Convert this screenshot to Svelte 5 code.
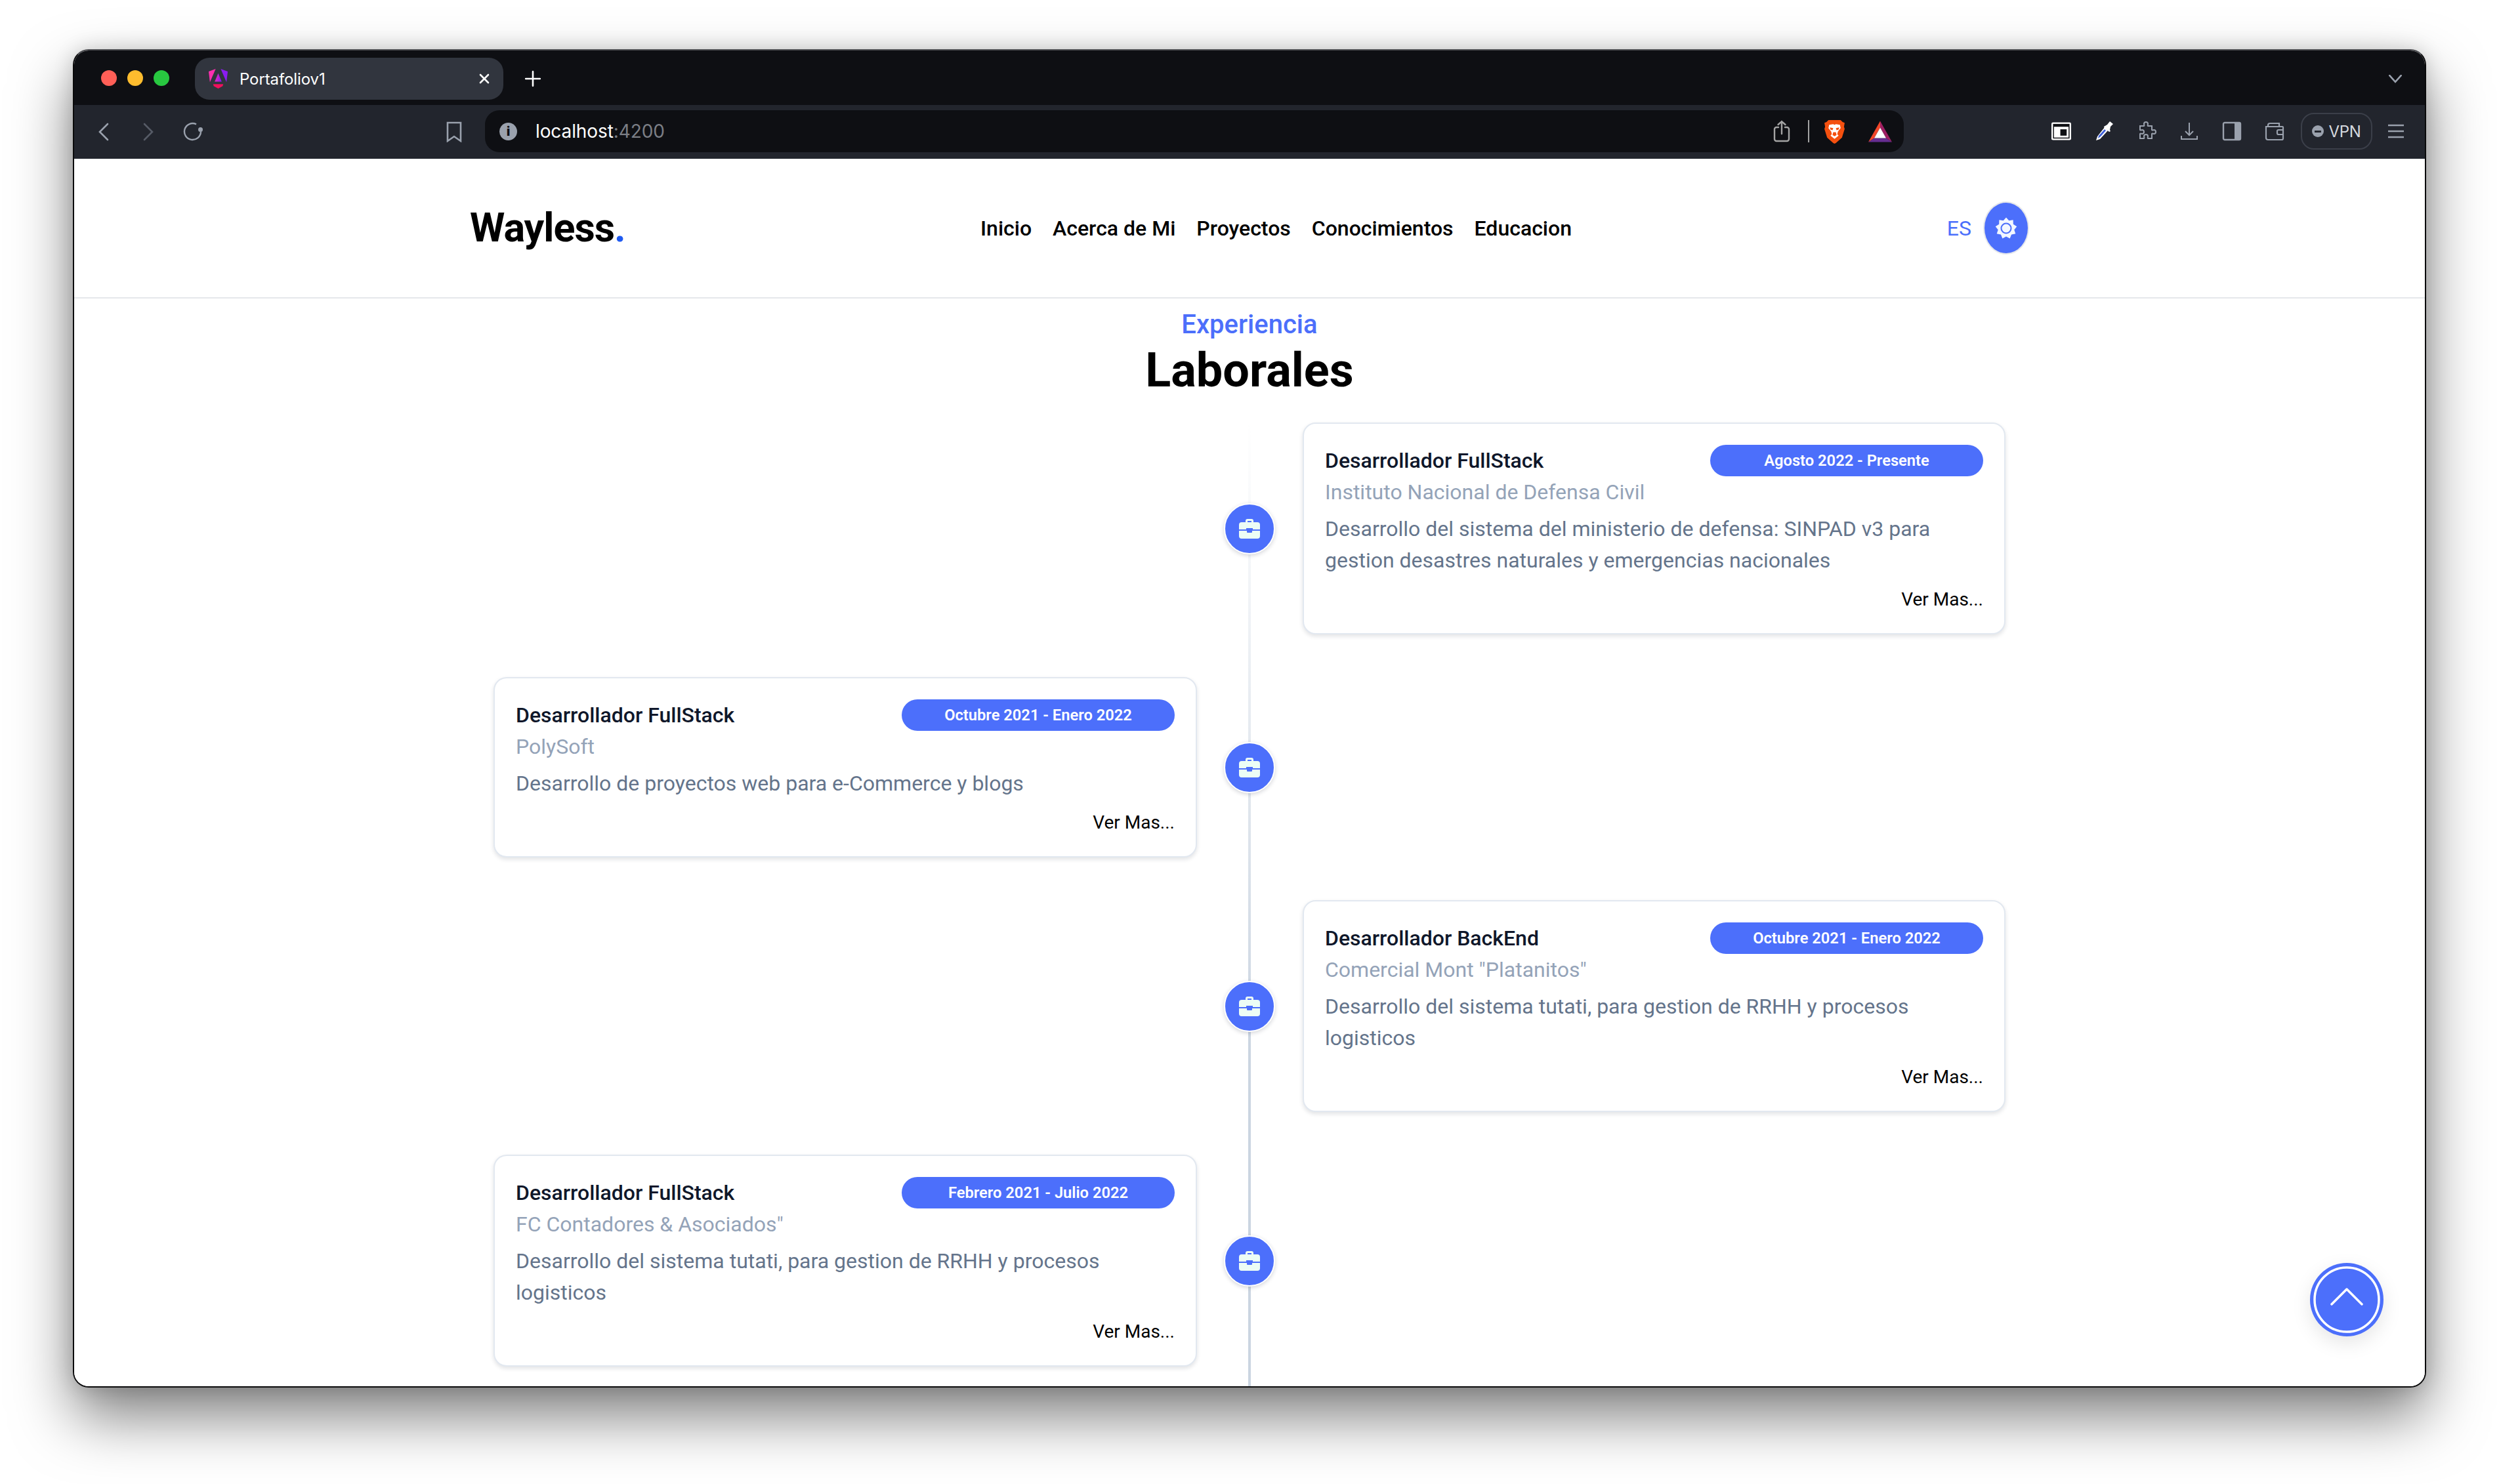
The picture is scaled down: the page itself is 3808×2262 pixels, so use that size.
<script>
  const left = [
    null,
    { title: 'Desarrollador FullStack', date: 'Octubre 2021 - Enero 2022', org: 'PolySoft', text: 'Desarrollo de proyectos web para e-Commerce y blogs' },
    null,
    { title: 'Desarrollador FullStack', date: 'Febrero 2021 - Julio 2022', org: 'FC Contadores & Asociados"', text: 'Desarrollo del sistema tutati, para gestion de RRHH y procesos logisticos' }
  ];
  const right = [
    { title: 'Desarrollador FullStack', date: 'Agosto 2022 - Presente', org: 'Instituto Nacional de Defensa Civil', text: 'Desarrollo del sistema del ministerio de defensa: SINPAD v3 para gestion desastres naturales y emergencias nacionales' },
    null,
    { title: 'Desarrollador BackEnd', date: 'Octubre 2021 - Enero 2022', org: 'Comercial Mont "Platanitos"', text: 'Desarrollo del sistema tutati, para gestion de RRHH y procesos logisticos' },
    null
  ];
  const rows = [0, 1, 2, 3];
  const nav = ['Inicio', 'Acerca de Mi', 'Proyectos', 'Conocimientos', 'Educacion'];
  const star = Array.from({ length: 18 }, (_, i) => {
    const a = (i * Math.PI) / 9 - Math.PI / 2;
    const r = i % 2 ? 12.5 : 16.5;
    return `${(18 + r * Math.cos(a)).toFixed(2)},${(18 + r * Math.sin(a)).toFixed(2)}`;
  }).join(' ');
</script>

{#snippet card(c)}
  <article class="card">
    <div class="card-head">
      <h3>{c.title}</h3>
      <span class="pill">{c.date}</span>
    </div>
    <p class="org">{c.org}</p>
    <p class="desc">{c.text}</p>
    <a class="more" href="#top">Ver Mas...</a>
  </article>
{/snippet}

<div class="desktop">
<div class="window">
  <div class="tabstrip">
    <div class="lights">
      <i class="red"></i><i class="yellow"></i><i class="green"></i>
    </div>
    <div class="tab">
      <svg class="fav" viewBox="0 0 32 34">
        <defs>
          <linearGradient id="ng" x1="0" y1="0" x2="1" y2="0.2"><stop offset="0" stop-color="#ff2fb0"/><stop offset="1" stop-color="#8a1cf0"/></linearGradient>
        </defs>
        <path d="M12 1 1 5l2 17Z" fill="#ff2fb0"/>
        <path d="M20 1l11 4-2 17Z" fill="#8a1cf0"/>
        <path d="M16 8l5.500 13h-11Z" fill="url(#ng)"/>
        <path d="M8 25h16l-1 3-7 4-7-4Z" fill="#f0105c"/>
      </svg>
      <span class="tab-title">Portafoliov1</span>
      <svg class="close" viewBox="0 0 16 16"><path d="M2 2l12 12M14 2 2 14" stroke="#fff" stroke-width="2.600" stroke-linecap="round"/></svg>
    </div>
    <svg class="plus" viewBox="0 0 24 24"><path d="M12 2v20M2 12h20" stroke="#fff" stroke-width="2.400" stroke-linecap="round"/></svg>
    <svg class="expand" viewBox="0 0 20 12"><path d="M2 1l8 9 8-9" fill="none" stroke="#9aa1ad" stroke-width="2.400" stroke-linecap="round"/></svg>
  </div>

  <div class="toolbar">
    <svg class="nav-btn back" viewBox="0 0 20 30"><path d="M16 3 4 15l12 12" fill="none" stroke="#9aa1ad" stroke-width="2.600" stroke-linecap="round"/></svg>
    <svg class="nav-btn fwd" viewBox="0 0 20 30"><path d="M4 3l12 12L4 27" fill="none" stroke="#565b66" stroke-width="2.600" stroke-linecap="round"/></svg>
    <svg class="reload" viewBox="0 0 32 32"><path d="M27 15.800A12.500 12.500 0 1 1 20 4.300" fill="none" stroke="#9aa1ad" stroke-width="2.400"/><circle cx="26.500" cy="12.500" r="3.500" fill="#9aa1ad"/></svg>
    <svg class="bookmark" viewBox="0 0 24 32"><path d="M2 2h20v28l-10-7-10 7Z" fill="none" stroke="#9aa1ad" stroke-width="2.600"/></svg>
    <div class="address">
      <span class="info">i</span>
      <span class="url">localhost<em>:4200</em></span>
      <svg class="share" viewBox="0 0 26 34"><path d="M8 11H5a3 3 0 0 0-3 3v15a3 3 0 0 0 3 3h16a3 3 0 0 0 3-3V14a3 3 0 0 0-3-3h-3M13 21V2M7.500 7 13 2l5.500 5" fill="none" stroke="#a3a3a3" stroke-width="2.400" stroke-linecap="round"/></svg>
      <span class="sep"></span>
      <svg class="brave" viewBox="0 0 32 36">
        <path d="M7 1h18l3 3 3 1-1 6 1 3-4 13-9 8-2 1-2-1-9-8-4-13 1-3-1-6 3-1Z" fill="#f4500f"/>
        <path d="M8 8l6-1 2 1 2-1 6 1 1 5-4 5-1 4 2 2-6 5-6-5 2-2-1-4-4-5Z" fill="#fff"/>
        <path d="M9 12l5 1-1 3-3-1ZM23 12l-5 1 1 3 3-1ZM14 19h4l1 4-3 2-3-2Z" fill="#f4500f"/>
      </svg>
      <svg class="bat" viewBox="0 0 36 32">
        <path d="M18 0 0 32l9-6 9-16Z" fill="#f1462a"/>
        <path d="M18 0 36 32l-9-6-9-16Z" fill="#9e1f63"/>
        <path d="M0 32h36l-9-6H9Z" fill="#662d91"/>
        <path d="M18 10 9 26h18Z" fill="#fff"/>
      </svg>
    </div>
    <div class="tools">
      <svg viewBox="0 0 31 28"><rect x="0" y="0" width="31" height="28" rx="2.500" fill="#fff"/><rect x="2.500" y="2.500" width="26" height="23" fill="#0e0f13"/><rect x="4" y="7" width="23" height="17" fill="#fff"/><rect x="14" y="11" width="10" height="10" fill="#0e0f13"/></svg>
      <svg viewBox="0 0 30 30"><path d="M16 9 5 23l-2 6 6-2 12-13Z" fill="#fff"/><path d="M7 22l9-10 2 2-8 9-4 3Z" fill="#3d5fd8"/><path d="M15 8l5-3 4-5 5 4-4 4-1 5 1 2-2 1-8-7Z" fill="#fff"/></svg>
      <svg viewBox="3 0 26 30"><path d="M12 4a3 3 0 0 1 6 0c0 1-1 2 0 3h6v6c1 1 2 0 3 0a3 3 0 0 1 0 6c-1 0-2-1-3 0v7h-6c-1-1 0-2 0-3a3 3 0 0 0-6 0c0 1 1 2 0 3H6v-7c1-1 2 0 3 0a3 3 0 0 0 0-6c-1 0-2 1-3 0V7h6c1-1 0-2 0-3Z" fill="none" stroke="#9aa1ad" stroke-width="2"/></svg>
      <svg viewBox="0 0 30 30"><path d="M15 2v19M9 15l6 6 6-6M3 22v5h24v-5" fill="none" stroke="#9aa1ad" stroke-width="2"/></svg>
      <svg viewBox="0 0 30 30"><rect x="2" y="2" width="26" height="26" rx="2" fill="none" stroke="#9aa1ad" stroke-width="2.400"/><rect x="19" y="2" width="9" height="26" fill="#9aa1ad"/></svg>
      <svg viewBox="0 0 30 30"><path d="M5 8V6a3 3 0 0 1 3-3h14v5M2 8h25a1 1 0 0 1 1 1v17a2 2 0 0 1-2 2H5a3 3 0 0 1-3-3ZM28 13h-7a2 2 0 0 0-2 2v3a2 2 0 0 0 2 2h7" fill="none" stroke="#9aa1ad" stroke-width="2.200"/></svg>
      <div class="vpn"><span class="vpn-dot"></span>VPN</div>
      <svg class="burger" viewBox="0 0 30 30"><path d="M3 6h24M3 15h24M3 24h24" stroke="#9aa1ad" stroke-width="2.400"/></svg>
    </div>
  </div>

  <main class="page" id="top">
    <header class="header">
      <div class="logo">Wayless<span>.</span></div>
      <nav class="nav">
        {#each nav as item}<a href="#top">{item}</a>{/each}
      </nav>
      <div class="actions">
        <span class="lang">ES</span>
        <button class="theme" aria-label="Tema">
          <svg viewBox="0 0 36 36">
            <polygon points={star} fill="#f2f7ff"/>
            <circle cx="18" cy="18" r="7.500" fill="#f2f7ff" stroke="#4c6ffb" stroke-width="2"/>
          </svg>
        </button>
      </div>
    </header>

    <section class="intro">
      <h2>Experiencia</h2>
      <h1>Laborales</h1>
    </section>

    <section class="timeline">
      <div class="line"></div>
      {#each rows as r}
        <div class="row">
          <div class="slot">{#if left[r]}{@render card(left[r])}{/if}</div>
          <div class="dot">
            <svg viewBox="0 0 32 30"><path fill="#ecfdf5" d="M10 5V3a3 3 0 0 1 3-3h6a3 3 0 0 1 3 3v2h6a4 4 0 0 1 4 4v7H21v-2h-10v2H0V9a4 4 0 0 1 4-4Zm3 0h6V3h-6ZM0 18h12v2a1 1 0 0 0 1 1h6a1 1 0 0 0 1-1v-2h12v8a4 4 0 0 1-4 4H4a4 4 0 0 1-4-4Z"/></svg>
          </div>
          <div class="slot">{#if right[r]}{@render card(right[r])}{/if}</div>
        </div>
      {/each}
    </section>

    <button class="top-btn" aria-label="Subir">
      <svg viewBox="0 0 112 112">
        <circle cx="56" cy="56" r="49" fill="none" stroke="#fff" stroke-width="3.500"/>
        <path d="M33 63 56 40l23 23" fill="none" stroke="#fff" stroke-width="3.500" stroke-linecap="round" stroke-linejoin="round"/>
      </svg>
    </button>
  </main>
</div>
</div>

<style>
  :global(body) {
    margin: 0;
    background: #fff;
  }
  .desktop {
    box-sizing: border-box;
    height: 2262px;
    padding: 75px 0 0 111px;
    overflow: hidden;
    background: #fff;
  }
  .window {
    box-sizing: border-box;
    position: relative;
    width: 3586px;
    height: 2040px;
    border-radius: 24px;
    border: 2px solid #0a0a0b;
    border-top-color: #4a4b4f;
    display: flex;
    flex-direction: column;
    font-family: Inter, "Liberation Sans", sans-serif;
    box-shadow: 0 44px 90px rgba(0, 0, 0, 0.5), 0 0 30px rgba(0, 0, 0, 0.16);
    background: #fff;
  }
  .tabstrip {
    flex: none;
    height: 83px;
    background: #0e0f13;
    display: flex;
    align-items: center;
    border-radius: 22px 22px 0 0;
  }
  .lights {
    display: flex;
    gap: 16px;
    margin-left: 41px;
  }
  .lights i {
    width: 24px;
    height: 24px;
    border-radius: 50%;
  }
  .red { background: #ff5f57; }
  .yellow { background: #febc2e; }
  .green { background: #28c840; }
  .tab {
    box-sizing: border-box;
    margin-left: 39px;
    width: 470px;
    height: 64px;
    background: #31353e;
    border-radius: 22px;
    display: flex;
    align-items: center;
    padding: 0 21px 0 20px;
    margin-top: 3px;
  }
  .fav { width: 31px; height: 33px; }
  .tab-title {
    margin-left: 17px;
    flex: 1;
    font-size: 24px;
    letter-spacing: -0.100px;
    color: #fff;
  }
  .close { width: 16px; height: 16px; }
  .plus { width: 26px; height: 26px; margin-left: 32px; margin-top: 3px; }
  .expand { width: 22px; height: 13px; margin-left: auto; margin-right: 34px; margin-top: 3px; }
  .toolbar {
    flex: none;
    height: 82px;
    background: #22252d;
    display: flex;
    align-items: center;
  }
  .nav-btn { width: 20px; height: 30px; }
  .back { margin-left: 35px; }
  .fwd { margin-left: 48px; }
  .reload { width: 32px; height: 32px; margin-left: 43px; }
  .bookmark { width: 24px; height: 32px; margin-left: 369px; }
  .address {
    box-sizing: border-box;
    width: 2162px;
    height: 64px;
    margin-left: 35px;
    background: #0e0f13;
    border-radius: 22px;
    display: flex;
    align-items: center;
    padding-left: 22px;
    margin-top: -2px;
  }
  .info {
    width: 27px;
    height: 27px;
    border-radius: 50%;
    background: #9aa1ad;
    color: #0e0f13;
    font-size: 20px;
    font-weight: 800;
    line-height: 27px;
    text-align: center;
  }
  .url {
    margin-left: 28px;
    color: #fff;
    font-size: 28px;
    letter-spacing: -0.100px;
    flex: 1;
  }
  .url em { font-style: normal; color: #7b7e85; }
  .share { width: 26px; height: 34px; margin-right: 27px; }
  .sep { width: 2px; height: 34px; background: #a3a3a3; margin-right: 22px; }
  .brave { width: 33px; height: 37px; margin-right: 35px; }
  .bat { width: 36px; height: 33px; margin-right: 18px; }
  .tools {
    display: flex;
    align-items: center;
    gap: 35px;
    margin-left: 225px;
    margin-top: -2px;
  }
  .tools > svg { width: 30px; height: 30px; }
  .vpn {
    box-sizing: border-box;
    width: 109px;
    height: 56px;
    margin-left: -10px;
    border: 2px solid #3b3f49;
    border-radius: 20px;
    display: flex;
    align-items: center;
    justify-content: center;
    gap: 7px;
    color: #d5d8de;
    font-size: 24px;
    letter-spacing: -0.300px;
  }
  .vpn-dot {
    width: 18px;
    height: 18px;
    border-radius: 50%;
    background: #9aa1ad;
    position: relative;
  }
  .vpn-dot::after {
    content: '';
    position: absolute;
    left: 4px;
    right: 4px;
    top: 8px;
    height: 3px;
    background: #22252d;
  }
  .tools > .burger { margin-left: -14px; }
  .page {
    flex: 1;
    min-height: 0;
    position: relative;
    background: #fff;
    border-radius: 0 0 22px 22px;
    overflow: hidden;
    font-family: Roboto, Inter, sans-serif;
  }
  .header {
    box-sizing: border-box;
    height: 213px;
    border-bottom: 2px solid #e5e7eb;
    padding: 0 603px;
    display: flex;
    align-items: center;
  }
  .logo {
    font-size: 61px;
    font-weight: 700;
    letter-spacing: -1px;
    color: #000;
    width: 778px;
    margin-top: -2px;
  }
  .logo span { color: #1f5af0; }
  .nav {
    display: flex;
    gap: 32px;
  }
  .nav a {
    color: #000;
    text-decoration: none;
    font-size: 32px;
    font-weight: 500;
  }
  .actions {
    margin-left: auto;
    display: flex;
    align-items: center;
    gap: 18px;
  }
  .lang {
    color: #4c6ffb;
    font-size: 32px;
  }
  .theme {
    box-sizing: border-box;
    width: 70px;
    height: 81px;
    padding: 0;
    border-radius: 50%;
    border: 2px solid #e5e7eb;
    background: #4c6ffb;
    display: flex;
    align-items: center;
    justify-content: center;
  }
  .theme svg { width: 36px; height: 36px; }
  .intro {
    text-align: center;
    padding-top: 14px;
    height: 189px;
    box-sizing: border-box;
  }
  .intro h2 {
    margin: 0;
    font-size: 40px;
    line-height: 52px;
    font-weight: 500;
    color: #4c6ffb;
  }
  .intro h1 {
    margin: 0;
    font-size: 72px;
    line-height: 88px;
    font-weight: 700;
    color: #000;
  }
  .timeline {
    position: relative;
    margin-left: 639px;
    display: flex;
    flex-direction: column;
    gap: 65px;
  }
  .line {
    position: absolute;
    left: 1150px;
    top: 0;
    height: 1600px;
    width: 4px;
    background: linear-gradient(to bottom, transparent, #cbd5e1 60%, #cbd5e1);
  }
  .row {
    position: relative;
    display: grid;
    grid-template-columns: 1072px 79px 1071px;
    column-gap: 41px;
    align-items: center;
  }
  .slot { min-width: 0; }
  .dot {
    box-sizing: border-box;
    width: 78px;
    height: 78px;
    border-radius: 50%;
    background: #4c6ffb;
    border: 2px solid #fff;
    box-shadow: 0 2px 6px rgba(15, 23, 42, 0.18);
    display: flex;
    align-items: center;
    justify-content: center;
  }
  .dot svg { width: 32px; height: 30px; }
  .card {
    box-sizing: border-box;
    background: #fff;
    border: 2px solid #e2e8f0;
    border-radius: 20px;
    padding: 32px 32px 27px;
    box-shadow: 0 3px 6px rgba(15, 23, 42, 0.12);
    display: flex;
    flex-direction: column;
  }
  .card-head {
    display: flex;
    justify-content: space-between;
    align-items: center;
    height: 48px;
  }
  .card h3 {
    margin: 0;
    font-size: 32px;
    font-weight: 500;
    color: #0f172a;
  }
  .pill {
    box-sizing: border-box;
    width: 416px;
    height: 48px;
    line-height: 48px;
    border-radius: 24px;
    background: #4c6ffb;
    color: #fff;
    text-align: center;
    font-size: 23.700px;
    font-weight: 600;
  }
  .org {
    margin: 0;
    font-size: 32px;
    line-height: 48px;
    color: #94a3b8;
  }
  .desc {
    margin: 8px 0 0;
    font-size: 32px;
    line-height: 48px;
    color: #64748b;
  }
  .more {
    margin-top: 12px;
    align-self: flex-end;
    font-size: 28px;
    line-height: 48px;
    color: #000;
    text-decoration: none;
  }
  .top-btn {
    position: absolute;
    left: 3407px;
    top: 1683px;
    width: 112px;
    height: 112px;
    padding: 0;
    border: 0;
    border-radius: 50%;
    background: #4c6ffb;
    box-shadow: 0 10px 30px rgba(0, 0, 0, 0.1);
  }
  .top-btn svg { display: block; width: 112px; height: 112px; }
</style>
